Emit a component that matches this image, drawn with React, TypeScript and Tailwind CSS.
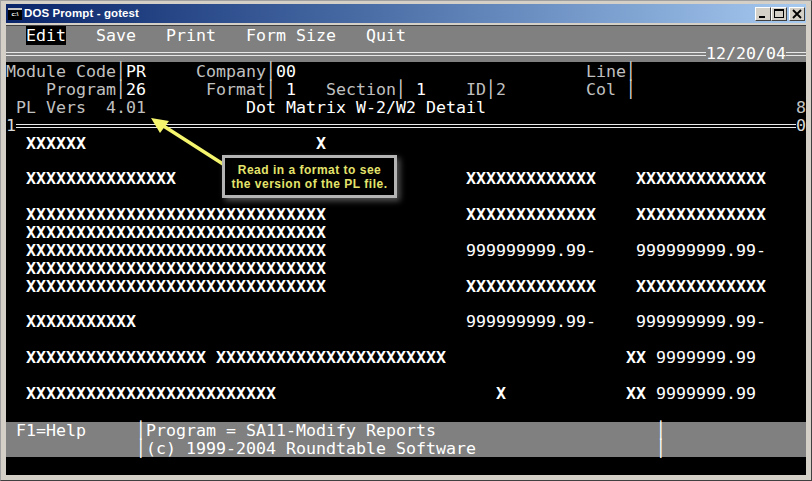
import React from "react";

const ROW = "h-[17.88px] leading-[17.88px] whitespace-pre";
const XS13 = "XXXXXXXXXXXXX";
const XS30 = "XXXXXXXXXXXXXXXXXXXXXXXXXXXXXX";
const AMT = "999999999.99-";

type Seg = [number, string, string?];

// one terminal row: segments are placed on the 80 column character grid
function Row({ segs = [] }: { segs?: Seg[] }) {
  let col = 0;
  return (
    <div className={ROW}>
      {segs.map(([at, text, tone], i) => {
        const pad = " ".repeat(Math.max(0, at - col));
        col = at + text.length;
        return (
          <React.Fragment key={i}>
            {pad}
            <span className={tone}>{text}</span>
          </React.Fragment>
        );
      })}
      {" "}
    </div>
  );
}

const LABEL = "text-[#c0c0c0]";
const BAR = "text-[#d8d8d8]";
const XX = "font-bold";

function DoubleLine() {
  return <div className="h-[4px] flex-1 border-y border-[#e8e8e8]" />;
}

function WinButton({ children }: { children: React.ReactNode }) {
  return (
    <div className="w-[16px] h-[14px] bg-[#d4d0c8] border border-t-white border-l-white border-r-[#404040] border-b-[#404040] flex items-center justify-center">
      {children}
    </div>
  );
}

export default function App() {
  return (
    <div className="relative w-[812px] h-[481px] overflow-hidden bg-[#d4d0c8] border border-[#a0a0a0] border-b-[#404040] border-r-[#404040] px-[5px] pt-[3px] pb-[5px] flex flex-col font-['DejaVu_Sans_Mono',monospace] text-[16.61px] text-white">
      {/* TITLE BAR */}
      <div className="h-[19px] shrink-0 flex items-center bg-gradient-to-r from-[#0a246a] to-[#a6caf0] pl-[2px] pr-[1px]">
        <div className="w-[14px] h-[12px] bg-black border-t-2 border-[#c8c8c8] text-[6px] leading-[9px] font-bold text-white text-center overflow-hidden font-['Liberation_Sans',sans-serif]">
          c:\
        </div>
        <span className="ml-[2px] font-['Liberation_Sans',sans-serif] font-bold text-[11.5px] tracking-[0.1px] text-white">
          DOS Prompt - gotest
        </span>
        <div className="ml-auto flex">
          <WinButton>
            <div className="w-[6px] h-[2px] bg-black mt-[6px] mr-[2px]" />
          </WinButton>
          <WinButton>
            <div className="w-[10px] h-[9px] border border-t-2 border-black" />
          </WinButton>
          <div className="ml-[2px]">
            <WinButton>
              <svg width="10" height="10" viewBox="0 0 10 10">
                <path d="M1 1 L9 9 M9 1 L1 9" stroke="#000" strokeWidth="1.8" />
              </svg>
            </WinButton>
          </div>
        </div>
      </div>

      {/* TERMINAL */}
      <div className="mt-[2px] flex-1 bg-black border-t border-[#404040] overflow-hidden">
        {/* menu */}
        <div className="bg-[#808080] h-[36px] pt-[1px]">
          <div className={ROW}>
            {"  "}
            <span className="bg-black">Edit</span>
            {"   Save   Print   Form Size   Quit"}
          </div>
          <div className={`${ROW} flex items-center`}>
            <DoubleLine />
            <span>12/20/04</span>
            <div className="h-[4px] w-[20px] border-y border-[#e8e8e8]" />
          </div>
        </div>

        <div className="pt-[1px]">
          <Row segs={[[0, "Module Code", LABEL], [11, "│", BAR], [12, "PR"], [19, "Company", LABEL], [26, "│", BAR], [27, "00"], [58, "Line", LABEL], [62, "│", BAR]]} />
          <Row segs={[[4, "Program", LABEL], [11, "│", BAR], [12, "26"], [20, "Format", LABEL], [26, "│", BAR], [28, "1"], [32, "Section", LABEL], [39, "│", BAR], [41, "1"], [46, "ID", LABEL], [48, "│", BAR], [49, "2", LABEL], [58, "Col", LABEL], [62, "│", BAR]]} />
          <Row segs={[[1, "PL Vers", LABEL], [10, "4.01", LABEL], [24, "Dot Matrix W-2/W2 Detail"], [79, "8", LABEL]]} />
          <div className={`${ROW} flex items-center text-[#d8d8d8]`}>
            <span>1</span>
            <DoubleLine />
            <span>0</span>
          </div>

          <Row segs={[[2, "XXXXXX", XX], [31, "X", XX]]} />
          <Row />
          <Row segs={[[2, "XXXXXXXXXXXXXXX", XX], [46, XS13, XX], [63, XS13, XX]]} />
          <Row />
          <Row segs={[[2, XS30, XX], [46, XS13, XX], [63, XS13, XX]]} />
          <Row segs={[[2, XS30, XX]]} />
          <Row segs={[[2, XS30, XX], [46, AMT], [63, AMT]]} />
          <Row segs={[[2, XS30, XX]]} />
          <Row segs={[[2, XS30, XX], [46, XS13, XX], [63, XS13, XX]]} />
          <Row />
          <Row segs={[[2, "XXXXXXXXXXX", XX], [46, AMT], [63, AMT]]} />
          <Row />
          <Row segs={[[2, "XXXXXXXXXXXXXXXXXX", XX], [21, "XXXXXXXXXXXXXXXXXXXXXXX", XX], [62, "XX", XX], [65, "9999999.99"]]} />
          <Row />
          <Row segs={[[2, "XXXXXXXXXXXXXXXXXXXXXXXXX", XX], [49, "X", XX], [62, "XX", XX], [65, "9999999.99"]]} />
        </div>

        {/* status bar */}
        <div className="mt-[19px] bg-[#808080]">
          <Row segs={[[1, "F1=Help"], [13, "│"], [14, "Program = SA11-Modify Reports"], [65, "│"]]} />
          <Row segs={[[13, "│"], [14, "(c) 1999-2004 Roundtable Software"], [65, "│"]]} />
        </div>
      </div>

      {/* annotation */}
      <svg className="absolute left-0 top-0" width="812" height="481">
        <path d="M222 163 L161 124" stroke="#f6f66e" strokeWidth="3.5" />
        <path d="M150 117 L168 120 L159 132 Z" fill="#f6f66e" />
      </svg>
      <div className="absolute left-[221px] top-[154px] w-[175px] h-[43px] bg-black border-[3px] border-[#b4b4b4] shadow-[3px_3px_6px_rgba(120,120,120,0.7)] flex flex-col items-center justify-center font-['Liberation_Sans',sans-serif] font-bold text-[12px] leading-[14px] tracking-[0.5px] text-[#e4e46c]">
        <span>Read in a format to see</span>
        <span>the version of the PL file.</span>
      </div>
    </div>
  );
}
